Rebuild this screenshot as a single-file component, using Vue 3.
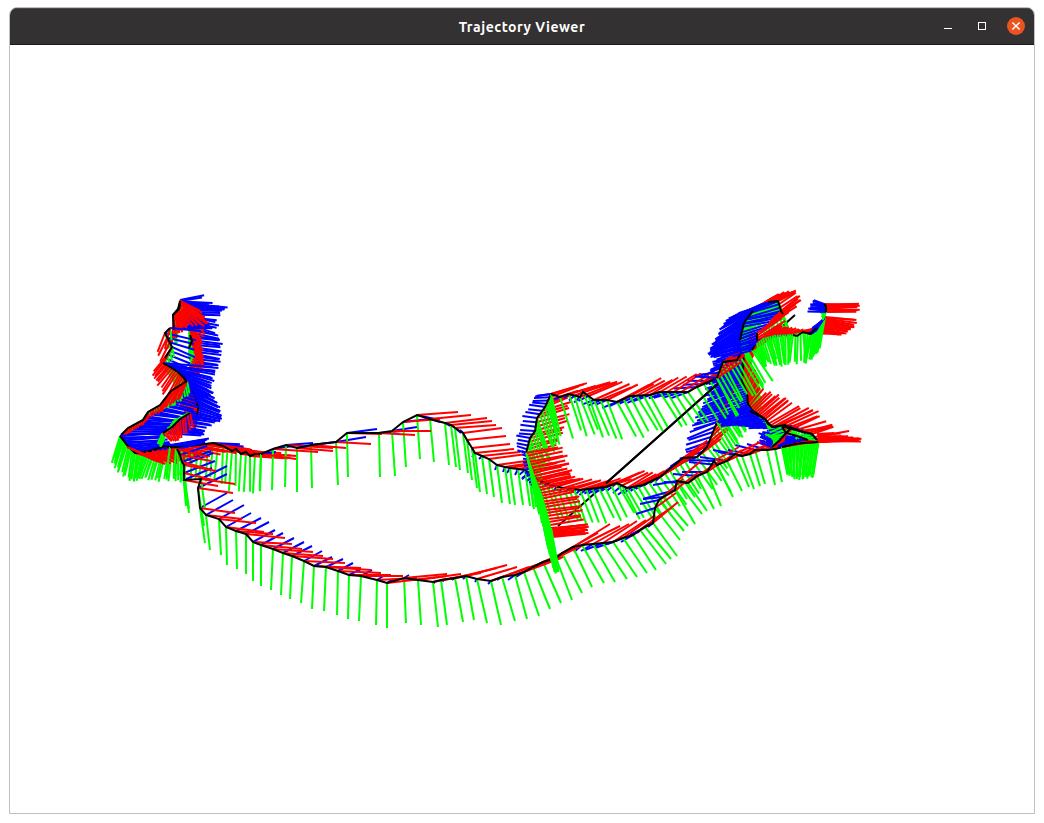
<script setup>
// Pose rows: x, y, then optional axis offsets: red dx dy, green dx dy, blue dx dy.
// Rows without axes take theirs from the neighbouring rows.
// "order" gives the paint order of the three axes, first one at the back.
const strands = [
  { step: 2.4, hiddenPath: true, poses: [
    [180, 300, 14, 14, 4, 12, 23, -4],
    [184, 303, 20, 18, 4, 16, 42, 5],
    [190, 312, 16, 16, 3, 14, 30, 0],
    [189, 325, 12, 18, 1, 18, 27, 8],
    [191, 340, 12, 18, -2, 18, 30, 3],
    [195, 354, 9, 14, -2, 14, 25, 4],
    [189, 368, 8, 8, 2, 8, 28, 2]] },
  { step: 2.4, poses: [
    [180, 301, 16, 12, 5, 10, 22, -3],
    [180, 305, 28, 18, 5, 10, 38, 3],
    [179, 309, 7, 19, 4, 12, 45, -3],
    [173, 315, 4, 20, 5, 15, 37, 10],
    [174, 330, -6, 18, 2, 15, 38, -2]] },
  { step: 1, order: 'r', hiddenPath: true, poses: [
    [180, 301, 20, 10, 0, 0, 0, 0], [184, 307, 24, 18, 0, 0, 0, 0],
    [181, 311, 8, 14, 0, 0, 0, 0], [176, 316, 2, 16, 0, 0, 0, 0]] },
  { step: 5, poses: [
    [170, 328, -5, 20, 2, 12, 32, 4],
    [165, 333, -8, 19, 3, 10, 30, 6],
    [172, 347, -10, 18, 2, 10, 22, 9],
    [165, 358, -12, 14, 3, 10, 22, 9]] },
  { step: 2.1, poses: [
    [163, 363, -10, 12, 4, 9, 50, 5],
    [170, 367, -13, 15, 3, 14, 43, 10],
    [178, 372, -14, 22, 0, 20, 33, 12],
    [184, 378, -9, 24, 0, 22, 25, 12],
    [190, 387, -8, 24, -6, 20, 24, 12],
    [195, 396, -5, 25, -8, 16, 24, 11],
    [198, 408, -3, 20, -8, 10, 23, 8],
    [197, 416, -4, 16, -8, 4, 22, 5]] },
  { step: 2.6, poses: [
    [187, 381, -8, 18, 3, 13, 25, 12],
    [171, 391, -9, 19, 2, 15, 28, 10],
    [160, 405, 1, 7, -2, 6, 34, 8],
    [148, 412, 1, 6, -3, 5, 42, 7],
    [143, 420, 0, 5, -3, 4, 47, 4],
    [128, 428, -2, 7, -3, 7, 48, 2],
    [121, 435, 0, 6, -7, 24, 41, -1]] },
  { step: 2.8, poses: [
    [190, 413, 3, 15, -7, 3, 30, 6],
    [180, 419, 1, 18, -8, 3, 32, 5],
    [172, 427, 5, 14, -8, 8, 31, 5],
    [163, 433, 8, 8, -4, 9, 40, 2]] },
  { step: 2, order: 'grb', poses: [
    [120, 436, 8, 7, -7, 26, 40, -2],
    [127, 445, 15, 8, -8, 27, 40, -3],
    [135, 453, 18, 5, -3, 28, 40, -7],
    [150, 451, 15, 13, -10, 26, 42, -8],
    [165, 446, 20, 12, -8, 34, 42, -6],
    [178, 449, 30, 8, 1, 31, 25, -7]] },
  { step: 5, order: 'r', hiddenPath: true, poses: [
    [127, 447, 24, 10, 0, 0, 0, 0], [140, 453, 18, 9, 0, 0, 0, 0],
    [152, 451, 26, 12, 0, 0, 0, 0], [172, 449, 24, 10, 0, 0, 0, 0]] },
  { step: 1.5, order: 'g', hiddenPath: true, poses: [
    [162, 434, -4, 10, -4, 10, 0, 0], [165, 437, 0, 0, -4, 10, 0, 0]] },
  { step: 5, poses: [
    [170, 447, 30, 6, -3, 30, 30, -6],
    [182, 447, 38, 6, -2, 34, 25, -3],
    [213, 443, 36, 7, -3, 36, 27, 2],
    [223, 446], [232, 451, 30, 4, -2, 38, 17, 1], [236, 449],
    [241, 454], [246, 452], [250, 456],
    [255, 454, 38, 1, -1, 38, 15, -1], [261, 454, 35, 3, -1, 37, 15, -2]] },
  { step: 5.8, poses: [
    [529, 473, 32, -6, 6, 36, -7, 6],
    [542, 482, 30, -6, 10, 34, -6, 5], [551, 485, 28, -7, 12, 34, -3, 5],
    [563, 488, 28, -8, 14, 32, -4, 4], [580, 490, 28, -9, 12, 34, -5, 5],
    [605, 487, 28, -9, 16, 32, -12, 6], [617, 483, 28, -13, 17, 32, -10, 8],
    [627, 488, 25, -14, 18, 31, -9, 7], [643, 485, 26, -15, 19, 30, -7, 4],
    [660, 477, 28, -17, 20, 30, -4, 4], [683, 458, 25, -17, 20, 32, -12, 8],
    [697, 457, 22, -18, 21, 29, -20, 7], [707, 447, 22, -18, 20, 28, -22, 6],
    [717, 422, 12, -12, 18, 28, -28, 11]] },
  { poses: [
    [261, 454, 35, 5, -1, 37, 15, -2],
    [273, 449, 45, 3, -1, 41, 20, -3], [286, 445, 47, 3, -1, 42, 27, -2],
    [297, 448, 36, 3, 0, 44, 22, -3], [311, 445, 35, 3, 1, 43, 25, -3],
    [336, 442, 35, 2, 2, 43, 30, -5], [347, 433, 35, 1, 1, 44, 30, -4],
    [379, 433, 36, 2, 1, 44, 23, -2], [392, 431, 39, 0, 3, 45, 25, -4],
    [403, 422, 37, -3, 3, 45, 27, -3], [417, 415, 41, -3, 3, 44, 18, 4],
    [430, 419, 41, -4, 4, 43, 10, 3], [445, 423, 42, -5, 4, 42, 5, 3],
    [451, 425, 41, -4, 5, 42, 6, 4], [455, 428, 41, -3, 5, 42, 6, 5],
    [463, 433, 39, -5, 5, 40, -3, -3],
    [467, 440, 39, -4, 5, 40, 2, 5], [472, 448, 38, -4, 5, 40, 1, 5],
    [475, 453, 39, -4, 5, 39, -3, 4], [482, 456, 38, -4, 5, 38, -3, 3],
    [489, 459, 38, -5, 5, 38, 2, 2], [497, 465, 36, -5, 5, 38, -2, 5],
    [505, 467, 34, -5, 5, 37, -2, 5], [510, 468, 34, -6, 5, 37, -3, 5],
    [518, 469, 34, -6, 5, 36, -3, 6], [525, 470, 32, -7, 5, 36, -6, 5],
    [529, 473, 30, -7, 5, 36, -7, 5]] },
  { poses: [
    [177, 449, 31, 8, 2, 26, 25, -6], [180, 455, 31, 6, 2, 26, 27, -9],
    [182, 462, 30, 8, 4, 44, 29, -11], [184, 465, 32, 6, 3, 40, 29, -12],
    [184, 473, 33, 8, 5, 36, 31, -12], [184, 480, 34, 6, 5, 33, 28, -12],
    [201, 479, 34, 5, 4, 30, 26, -13], [198, 488, 35, 5, 6, 38, 29, -14],
    [200, 508, 35, 5, 5, 35, 27, -15],
    [206, 515, 36, 4, 4, 35, 27, -15], [219, 519, 37, 4, 2, 36, 25, -14],
    [226, 527, 38, 5, 1, 38, 25, -14], [236, 531, 37, 3, 1, 38, 25, -13],
    [246, 534, 39, 4, 0, 40, 23, -12], [253, 542, 39, 2, 0, 39, 22, -12],
    [261, 545, 41, 4, 0, 41, 22, -12], [273, 549, 40, 3, -2, 41, 21, -11],
    [283, 553, 40, 3, -2, 42, 21, -11], [292, 556, 41, 3, -2, 43, 20, -10],
    [304, 561, 41, 2, -3, 42, 18, -10], [314, 566, 47, 2, -2, 43, 18, -9],
    [326, 567, 45, 3, -2, 44, 17, -8], [338, 571, 43, 2, -1, 44, 15, -8],
    [349, 575, 42, 0, -1, 44, 12, -6], [361, 576, 42, 0, -2, 45, 11, -6],
    [377, 580, 40, -2, -1, 45, 8, -5], [387, 583, 60, -7, 0, 45, 6, -4],
    [404, 578, 43, -4, 2, 45, 5, -3], [418, 580, 43, -6, 3, 45, 2, -1],
    [433, 582, 38, -7, 5, 45, 2, 1], [441, 580, 40, -7, 6, 45, 3, 1],
    [455, 578, 42, -10, 8, 44, -3, 2], [466, 576, 41, -11, 8, 44, -3, 3],
    [477, 579, 40, -12, 10, 44, -2, 3], [491, 581, 38, -14, 10, 44, -3, 3],
    [502, 577, 40, -14, 13, 44, -5, 3], [515, 575, 38, -15, 12, 44, -7, 5],
    [524, 572, 37, -14, 15, 44, -8, 5], [533, 567, 30, -10, 17, 42, -5, 3],
    [543, 562, 32, -14, 18, 41, -4, 2], [556, 558, 33, -16, 16, 42, -5, 3],
    [562, 553, 36, -20, 20, 40, -5, 4], [573, 547, 37, -23, 19, 40, -4, 3],
    [582, 545, 38, -19, 22, 38, -8, 7], [593, 544, 36, -20, 22, 38, -12, 7],
    [603, 543, 34, -22, 24, 36, -18, 7], [613, 542, 33, -22, 24, 35, -18, 6],
    [623, 538, 31, -22, 24, 35, -16, 6], [633, 535, 30, -22, 23, 35, -12, 7],
    [640, 530, 28, -20, 26, 34, -10, 5], [645, 527, 27, -20, 26, 32, -8, 6],
    [653, 523, 25, -21, 24, 33, -5, 4],
    [655, 508, 21, -15, 25, 32, -19, 6], [659, 500, 20, -12, 25, 31, -19, 4],
    [663, 497, 20, -18, 25, 29, -20, 2],
    [675, 490, 24, -18, 20, 34, -32, 9], [677, 481, 24, -20, 25, 33, -24, 4],
    [688, 483, 25, -17, 19, 28, -24, -1], [697, 476, 26, -17, 17, 33, -24, -2],
    [707, 472, 24, -16, 14, 34, -25, 0],
    [714, 461, 25, -14, 17, 31, -25, -1], [717, 465, 25, -15, 16, 32, -28, -3],
    [727, 461, 27, -13, 15, 30, -27, -4], [735, 454, 30, -14, 14, 33, -22, -4],
    [742, 456, 28, -13, 12, 33, -24, -4], [750, 454, 28, -10, 10, 32, -22, -4],
    [755, 450, 30, -11, 10, 34, -20, -5], [767, 450, 27, -10, 8, 35, -20, -6],
    [775, 449, 30, -8, 7, 33, -18, -7], [782, 447, 35, -7, 6, 26, -16, -7]] },
  { step: 1.5, poses: [
    [782, 447, 35, -7, 6, 26, -16, -7],
    [795, 444, 35, -6, 0, 34, -18, -8], [802, 443, 40, -6, -3, 35, -18, -7],
    [817, 442, 43, -2, -6, 34, -12, -6], [819, 440, 42, 0, -5, 36, -15, -8]] },
  { step: 3, hiddenPath: true, poses: [
    [717, 422, 6, -10, 18, 28, -25, 7], [722, 410, 7, -10, 18, 28, -25, 8],
    [731, 396, 5, -12, 18, 30, -29, 12], [741, 379, 6, -13, 20, 31, -29, 12],
    [743, 366, 10, -16, 19, 34, -27, 8]] },
  { step: 2.4, poses: [
    [744, 352, 16, -8, 20, 32, -28, 10], [743, 368, 10, -14, 14, 30, -34, 12],
    [742, 382, 8, -18, 13, 28, -37, 9], [747, 393, 10, -18, 12, 22, -35, 12],
    [748, 404, 12, -16, 8, 12, -34, 14], [752, 410, 18, -17, 5, 6, -30, 10],
    [765, 419, 24, -19, 5, 8, -34, 4]] },
  { step: 2, order: 'b', hiddenPath: true, poses: [
    [748, 406, 0, 0, 0, 0, -30, 14], [757, 414, 0, 0, 0, 0, -36, 8],
    [764, 424, 0, 0, 0, 0, -40, 1]] },
  { step: 3.6, poses: [
    [765, 419, 24, -19, 5, 12, -34, 4], [768, 424, 29, -18, 8, 12, -32, -1],
    [773, 427, 35, -18, 10, 8, -30, 0], [780, 426, 35, -16, 8, 6, -24, 2],
    [792, 429, 28, -12, 5, 7, -18, 2], [800, 431, 30, -5, -4, 8, -16, -5],
    [812, 434, 22, -8, -10, 4, -18, -8], [817, 440, 44, -1, -10, -2, -15, -8]] },
  { step: 3, poses: [
    [782, 427, 0, 0, -12, 6, -10, 3], [786, 433, 5, -3, -12, 4, -22, -1],
    [780, 440, 5, -3, -15, -6, -20, -7], [772, 447, 12, -6, 5, -8, -12, -5]] },
  { step: 1, order: 'r', hiddenPath: true, poses: [
    [817, 434, 18, -1, 0, 0, 0, 0], [818, 438, 34, 0, 0, 0, 0, 0],
    [818, 441, 42, -1, 0, 0, 0, 0]] },
  { step: 4, order: 'brg', poses: [
    [526, 453, 30, -8, 13, 32, -9, -3], [530, 438, 33, -8, 13, 34, -13, -2],
    [535, 431, 31, -9, 12, 35, -15, -1], [537, 418, 32, -9, 13, 35, -14, -2],
    [545, 407, 24, -9, 12, 38, -15, -2], [551, 394, 34, -11, 8, 42, -15, 2]] },
  { step: 3.1, order: 'brg', hiddenPath: true, poses: [
    [550, 525, 32, -5, 5, 38, -3, 1], [545, 507, 35, -5, 6, 40, -2, 2],
    [541, 493, 32, -7, 6, 42, -3, 2], [535, 479, 35, -9, 6, 38, -6, 4],
    [530, 468, 37, -8, 7, 37, -6, 2], [526, 453, 34, -7, 11, 36, -4, -2]] },
  { step: 1.6, order: 'g', hiddenPath: true, poses: [
    [530, 466, 0, 0, 8, 30, 0, 0], [535, 484, 0, 0, 9, 40, 0, 0],
    [544, 518, 0, 0, 10, 48, 0, 0], [548, 530, 0, 0, 8, 42, 0, 0]] },
  { step: 0.8, order: 'rg', hiddenPath: true, poses: [
    [552, 537, 34, -3, 6, 33, 0, 0],
    [551, 532, 36, -4, 5, 38, 0, 0],
    [551, 528, 35, -4, 7, 42, 0, 0]] },
  { step: 7, poses: [
    [551, 394, 35, -10, 8, 42, -15, 2],
    [560, 397, 35, -10, 12, 40, -6, 3], [569, 394, 40, -13, 12, 39, -5, 4],
    [580, 397, 35, -13, 14, 38, -6, 6], [583, 392, 35, -12, 15, 39, -9, 5],
    [594, 400, 34, -15, 15, 38, -12, 5], [607, 400, 30, -14, 16, 38, -12, 5],
    [617, 402, 32, -17, 19, 37, -14, 6], [630, 396, 30, -16, 20, 36, -15, 8],
    [650, 395, 28, -16, 20, 35, -18, 7], [660, 392, 28, -17, 20, 34, -20, 6],
    [688, 392, 28, -19, 22, 30, -18, 6],
    [697, 387, 25, -16, 21, 33, -22, 2], [717, 378, 26, -17, 20, 36, -22, -2]] },
  { step: 5, poses: [
    [717, 378, 26, -17, 20, 36, -22, -2],
    [723, 362, 28, -17, 20, 36, -13, 12], [737, 360, 22, -18, 20, 34, -25, 6],
    [742, 351, 27, -18, 20, 34, -26, 8], [752, 350, 26, -18, 20, 32, -28, 6]] },
  { step: 1.7, order: 'rgb', hiddenPath: true, poses: [
    [742, 350, 16, -10, 10, 12, -30, 7], [740, 338, 12, -9, 7, 14, -30, 16],
    [744, 323, 12, -9, 5, 12, -30, 20], [748, 316, 14, -8, 6, 14, -30, 20],
    [753, 311, 15, -10, 7, 16, -32, 17], [762, 304, 16, -9, 7, 14, -32, 15],
    [770, 302, 18, -10, 6, 14, -34, 14], [778, 301, 17, -9, 6, 20, -36, 12]] },
  { step: 3.6, hiddenPath: true, poses: [
    [778, 301, 17, -10, 10, 28, -36, 14], [781, 311, 18, -14, 12, 30, -34, 8],
    [772, 319, 28, -18, 8, 28, -30, 5], [763, 330, 26, -18, 12, 28, -22, 9]] },
  { step: 2.6, poses: [
    [752, 350, 24, -15, 14, 18, -20, 6], [757, 341, 26, -17, 8, 22, -24, 7],
    [757, 333, 26, -18, 8, 26, -26, 10]] },
  { step: 2.7, order: 'brg', hiddenPath: true, poses: [
    [757, 343, 18, -12, 4, 17, -8, 4], [763, 338, 14, -10, 9, 26, -5, 3],
    [775, 335, 12, -8, 6, 30, -4, 2], [793, 334, 10, -4, -3, 29, -4, 1],
    [803, 332, 12, -3, 2, 30, -4, -1], [810, 334, 16, -3, -5, 28, -5, -3],
    [817, 328, 22, 6, -6, 30, -6, 4]] },
  { step: 1, order: 'rgb', hiddenPath: true, poses: [
    [812, 334, 20, -1, -1, 24, -4, -1],
    [817, 330, 27, 4, -6, 28, -5, 2], [823, 320, 31, 6, -7, 32, -10, 8],
    [825, 317, 31, 2, -6, 30, -10, 14]] },
  { step: 1.1, order: 'rgb', poses: [
    [826, 312, 32, 0, -3, 8, -18, -1],
    [826, 306, 32, -1, -4, 9, -15, -2], [824, 304, 34, 0, -4, 7, -10, -4]] }
]

// Trajectory outlines that lie above all axes.
const outlines = [
  '180,301 178,309 173,315',
  '190,335 192,341 189,348',
  '740,340 744,323 748,317 753,311',
  '768,302 778,301 781,311 783,314',
  '793,335 797,336 803,332 810,334 817,328',
  '785,425 790,429 786,433 797,436 808,440',
  '750,411 765,419 772,427 785,425 795,429 803,432'
]

const channels = { r: ['#f00', 2], g: ['#0f0', 4], b: ['#00f', 6] }

function fillAxes(poses) {
  const known = poses.map((p, i) => (p.length > 2 ? i : -1)).filter(i => i >= 0)
  return poses.map((p, i) => {
    if (p.length > 2) return p
    const a = Math.max(...known.filter(k => k < i))
    const b = Math.min(...known.filter(k => k > i))
    const t = (i - a) / (b - a)
    return [...p, ...poses[a].slice(2).map((v, j) => v + (poses[b][j + 2] - v) * t)]
  })
}

function subdivide(poses, step) {
  if (!step) return poses
  const out = []
  for (let i = 0; i < poses.length - 1; i++) {
    const a = poses[i]
    const b = poses[i + 1]
    const n = Math.max(1, Math.round(Math.hypot(b[0] - a[0], b[1] - a[1]) / step))
    for (let k = 0; k < n; k++) out.push(a.map((v, j) => v + ((b[j] - v) * k) / n))
  }
  out.push(poses[poses.length - 1])
  return out
}

const drawn = strands.map((s, si) => {
  const frames = subdivide(fillAxes(s.poses), s.step)
  const lines = [...(s.order || 'bgr')].flatMap(name => {
    const [c, at] = channels[name]
    return frames.map((f, i) => {
      // small deterministic spread in axis length and angle where sampling is dense
      const len = s.step ? 1 + 0.06 * Math.sin((i + 1) * 2.4 + at + si) : 1
      const turn = s.step ? 0.035 * Math.sin((i + 1) * 4.1 + at) : 0
      const dx = (f[at] - f[at + 1] * turn) * len
      const dy = (f[at + 1] + f[at] * turn) * len
      return { c, d: `M${f[0].toFixed(1)} ${f[1].toFixed(1)}l${dx.toFixed(1)} ${dy.toFixed(1)}` }
    })
  })
  return { lines, path: s.hiddenPath ? '' : s.poses.map(p => `${p[0]},${p[1]}`).join(' ') }
})
</script>

<template>
  <main class="desktop">
    <section class="window">
      <header class="titlebar">
        <span class="side"></span>
        <h1 class="title">Trajectory Viewer</h1>
        <div class="side controls">
          <button class="ctl" aria-label="Minimize">
            <svg width="20" height="20" viewBox="0 0 20 20"><rect x="6" y="11" width="8" height="1" fill="#fff" /></svg>
          </button>
          <button class="ctl" aria-label="Maximize">
            <svg width="20" height="20" viewBox="0 0 20 20"><rect x="6.5" y="5.500" width="7" height="7" fill="none" stroke="#fff" /></svg>
          </button>
          <button class="ctl" aria-label="Close">
            <svg width="20" height="20" viewBox="0 0 20 20">
              <circle cx="10" cy="9" r="9" fill="#e95420" />
              <path d="M6.400 5.400l7.200 7.200M13.600 5.400l-7.200 7.200" stroke="#fff" stroke-width="1.4" />
            </svg>
          </button>
        </div>
      </header>
      <svg class="canvas" viewBox="10 45 1024 768">
        <path class="link" d="M558 526L795 315" />
        <g v-for="(s, i) in drawn" :key="i">
          <path v-for="(l, j) in s.lines" :key="j" class="axis" :d="l.d" :stroke="l.c" />
          <polyline v-if="s.path" class="track" :points="s.path" />
        </g>
        <polyline v-for="o in outlines" :key="o" class="track" :points="o" />
        <path class="link" d="M606 483.300L718 383.600" />
      </svg>
    </section>
  </main>
</template>

<style>
body {
  background: #fff;
}
</style>

<style scoped>
.desktop {
  width: 1044px;
  height: 823px;
  box-sizing: border-box;
  padding: 7px 9px 9px;
  background: #fff;
  overflow: hidden;
}
.window {
  box-sizing: border-box;
  width: 1026px;
  height: 807px;
  border: 1px solid #c0bfbf;
  border-radius: 8px 8px 0 0;
  overflow: hidden;
  background: #fff;
}
.titlebar {
  box-sizing: border-box;
  height: 37px;
  padding: 0 8px;
  display: flex;
  align-items: center;
  background: #333132;
  border-top: 1px solid #4a4849;
  border-bottom: 1px solid #1c1b1b;
}
.side {
  flex: 1;
}
.title {
  margin: 0;
  font: 700 14px/20px Ubuntu, "Noto Sans", "Open Sans", sans-serif;
  letter-spacing: 0.5px;
  color: #fff;
  white-space: nowrap;
}
.controls {
  display: flex;
  justify-content: flex-end;
  gap: 14px;
}
.ctl {
  width: 20px;
  height: 20px;
  padding: 0;
  border: 0;
  background: none;
}
.ctl svg {
  display: block;
}
.canvas {
  display: block;
  width: 1024px;
  height: 768px;
}
.axis {
  stroke-width: 2;
  fill: none;
}
.track,
.link {
  fill: none;
  stroke: #000;
  stroke-width: 2;
}
</style>
